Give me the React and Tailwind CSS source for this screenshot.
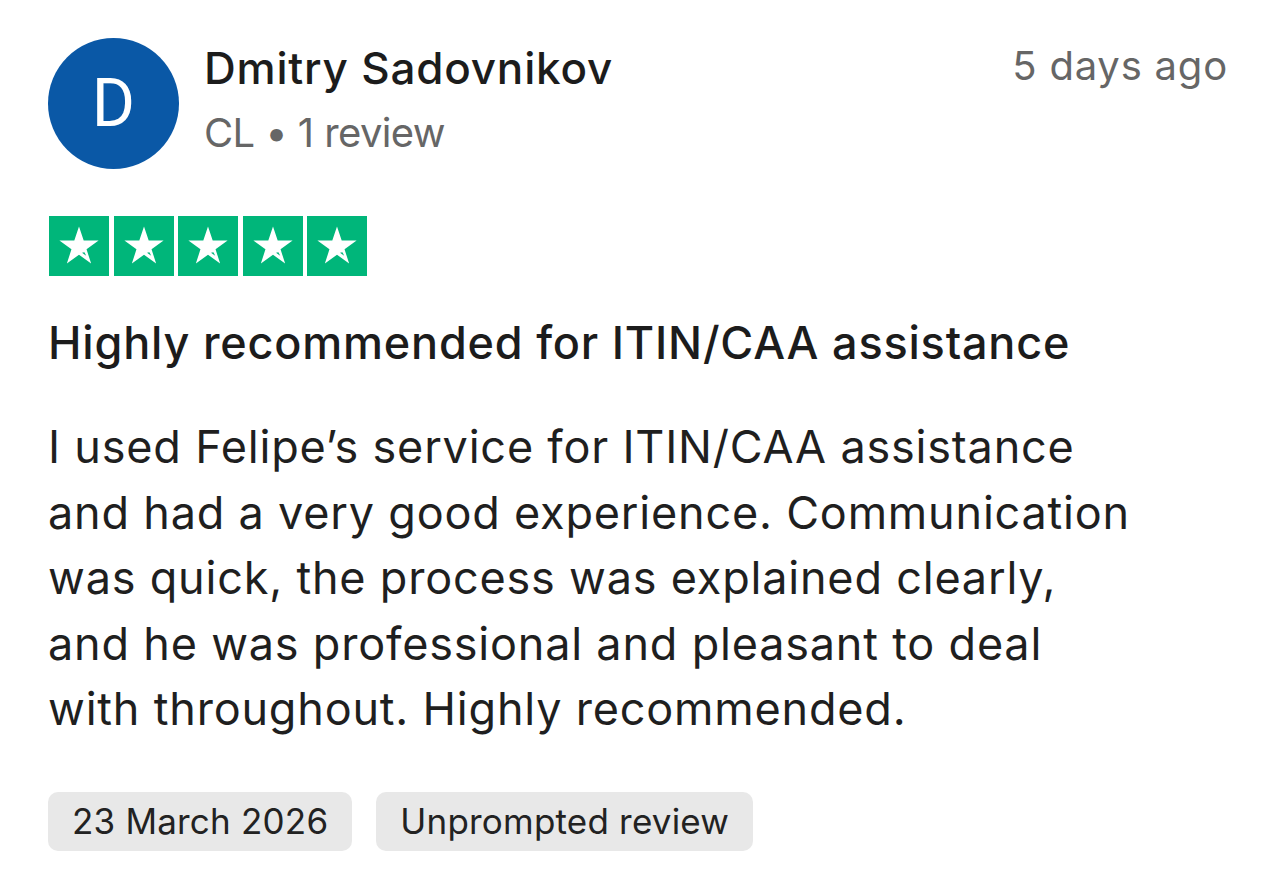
const STARS = [0, 1, 2, 3, 4];

function StarBox() {
  return (
    <div className="w-[60px] h-[60px] bg-[#00b67a] flex items-center justify-center">
      <svg width="48" height="48" viewBox="0 0 24 24">
        <path
          fill="#ffffff"
          d="M12 2.2l2.35 7.1h7.45l-6.03 4.38 2.3 7.1L12 16.4l-6.07 4.38 2.3-7.1L2.2 9.3h7.45z"
        />
        <path fill="#00b67a" d="M15.6 16.9l-2.1-1.5 1.2-0.3z" />
      </svg>
    </div>
  );
}

export default function App() {
  return (
    <div className="w-[1280px] h-[886px] bg-white text-[#1c1c1c] font-['Inter',sans-serif] pl-[48px] pr-[52px] pt-[38px]">
      <div className="flex items-start">
        <div className="w-[131px] h-[131px] rounded-full bg-[#0a58a6] flex items-center justify-center shrink-0">
          <span className="text-white text-[66px] font-['Roboto',sans-serif] leading-none">D</span>
        </div>
        <div className="ml-[25px] pt-[2px] flex-1">
          <div className="text-[44px] font-medium leading-[56px] tracking-[0.8px]">Dmitry Sadovnikov</div>
          <div className="text-[40px] text-[#666666] leading-[54px] mt-[10px] tracking-[-0.6px]">CL • 1 review</div>
        </div>
        <div className="text-[40px] text-[#666666] leading-[56px] tracking-[0.8px]">5 days ago</div>
      </div>

      <div className="flex gap-[4.5px] mt-[47px] ml-[1px]">
        {STARS.map((i) => (
          <StarBox key={i} />
        ))}
      </div>

      <h2 className="mt-[38px] text-[45px] font-medium leading-[58px] tracking-[0.8px]">
        Highly recommended for ITIN/CAA assistance
      </h2>

      <p className="mt-[42px] text-[45px] leading-[65.5px] text-[#1f1f1f] tracking-[0.8px]">
        I used Felipe’s service for ITIN/CAA assistance
        <br />
        and had a very good experience. Communication
        <br />
        was quick, the process was explained clearly,
        <br />
        and he was professional and pleasant to deal
        <br />
        with throughout. Highly recommended.
      </p>

      <div className="flex gap-[24px] mt-[50px]">
        <span className="h-[59px] px-[24px] rounded-[10px] bg-[#e8e8e8] text-[35px] text-[#222222] flex items-center tracking-[0.2px]">
          23 March 2026
        </span>
        <span className="h-[59px] px-[24px] rounded-[10px] bg-[#e8e8e8] text-[35px] text-[#222222] flex items-center tracking-[0.2px]">
          Unprompted review
        </span>
      </div>
    </div>
  );
}
